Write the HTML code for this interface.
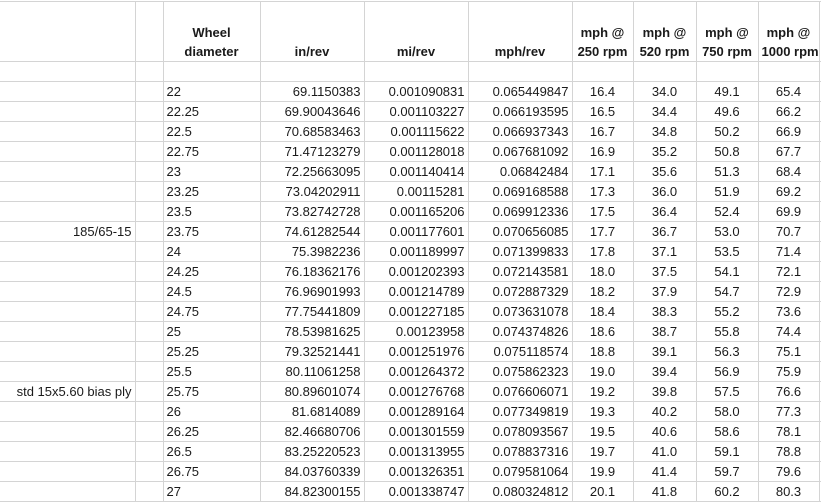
<!DOCTYPE html>
<html><head><meta charset="utf-8"><style>
body{margin:0;background:#fff;width:821px;height:501px;overflow:hidden}
table{border-collapse:collapse;table-layout:fixed;width:822px;position:absolute;left:0;top:1px;font-family:"Liberation Sans",Calibri,sans-serif;font-size:13px;color:#1a1a1a}
td{border:1px solid #d4d4d4;height:19px;padding:0 3px;white-space:nowrap;overflow:hidden;line-height:19px;box-sizing:border-box}
td:first-child{border-left:none}
tr.h td{height:60px;font-weight:bold;text-align:center;vertical-align:bottom;line-height:19px;padding-bottom:0}
tr td{height:20px}
.r{text-align:right}.c{text-align:center}
</style></head><body>
<table>
<colgroup><col style="width:135px"><col style="width:28px"><col style="width:97px"><col style="width:104px"><col style="width:104px"><col style="width:104px"><col style="width:61px"><col style="width:63px"><col style="width:62px"><col style="width:61px"><col style="width:3px"></colgroup>
<tr class="h"><td></td><td></td><td>Wheel<br>diameter</td><td>in/rev</td><td>mi/rev</td><td>mph/rev</td><td>mph @<br>250 rpm</td><td>mph @<br>520 rpm</td><td>mph @<br>750 rpm</td><td>mph @<br>1000 rpm</td><td></td></tr>
<tr><td></td><td></td><td></td><td></td><td></td><td></td><td></td><td></td><td></td><td></td><td></td></tr>
<tr><td></td><td></td><td>22</td><td class="r">69.1150383</td><td class="r">0.001090831</td><td class="r">0.065449847</td><td class="c">16.4</td><td class="c">34.0</td><td class="c">49.1</td><td class="c">65.4</td><td></td></tr>
<tr><td></td><td></td><td>22.25</td><td class="r">69.90043646</td><td class="r">0.001103227</td><td class="r">0.066193595</td><td class="c">16.5</td><td class="c">34.4</td><td class="c">49.6</td><td class="c">66.2</td><td></td></tr>
<tr><td></td><td></td><td>22.5</td><td class="r">70.68583463</td><td class="r">0.001115622</td><td class="r">0.066937343</td><td class="c">16.7</td><td class="c">34.8</td><td class="c">50.2</td><td class="c">66.9</td><td></td></tr>
<tr><td></td><td></td><td>22.75</td><td class="r">71.47123279</td><td class="r">0.001128018</td><td class="r">0.067681092</td><td class="c">16.9</td><td class="c">35.2</td><td class="c">50.8</td><td class="c">67.7</td><td></td></tr>
<tr><td></td><td></td><td>23</td><td class="r">72.25663095</td><td class="r">0.001140414</td><td class="r">0.06842484</td><td class="c">17.1</td><td class="c">35.6</td><td class="c">51.3</td><td class="c">68.4</td><td></td></tr>
<tr><td></td><td></td><td>23.25</td><td class="r">73.04202911</td><td class="r">0.00115281</td><td class="r">0.069168588</td><td class="c">17.3</td><td class="c">36.0</td><td class="c">51.9</td><td class="c">69.2</td><td></td></tr>
<tr><td></td><td></td><td>23.5</td><td class="r">73.82742728</td><td class="r">0.001165206</td><td class="r">0.069912336</td><td class="c">17.5</td><td class="c">36.4</td><td class="c">52.4</td><td class="c">69.9</td><td></td></tr>
<tr><td class="r">185/65-15</td><td></td><td>23.75</td><td class="r">74.61282544</td><td class="r">0.001177601</td><td class="r">0.070656085</td><td class="c">17.7</td><td class="c">36.7</td><td class="c">53.0</td><td class="c">70.7</td><td></td></tr>
<tr><td></td><td></td><td>24</td><td class="r">75.3982236</td><td class="r">0.001189997</td><td class="r">0.071399833</td><td class="c">17.8</td><td class="c">37.1</td><td class="c">53.5</td><td class="c">71.4</td><td></td></tr>
<tr><td></td><td></td><td>24.25</td><td class="r">76.18362176</td><td class="r">0.001202393</td><td class="r">0.072143581</td><td class="c">18.0</td><td class="c">37.5</td><td class="c">54.1</td><td class="c">72.1</td><td></td></tr>
<tr><td></td><td></td><td>24.5</td><td class="r">76.96901993</td><td class="r">0.001214789</td><td class="r">0.072887329</td><td class="c">18.2</td><td class="c">37.9</td><td class="c">54.7</td><td class="c">72.9</td><td></td></tr>
<tr><td></td><td></td><td>24.75</td><td class="r">77.75441809</td><td class="r">0.001227185</td><td class="r">0.073631078</td><td class="c">18.4</td><td class="c">38.3</td><td class="c">55.2</td><td class="c">73.6</td><td></td></tr>
<tr><td></td><td></td><td>25</td><td class="r">78.53981625</td><td class="r">0.00123958</td><td class="r">0.074374826</td><td class="c">18.6</td><td class="c">38.7</td><td class="c">55.8</td><td class="c">74.4</td><td></td></tr>
<tr><td></td><td></td><td>25.25</td><td class="r">79.32521441</td><td class="r">0.001251976</td><td class="r">0.075118574</td><td class="c">18.8</td><td class="c">39.1</td><td class="c">56.3</td><td class="c">75.1</td><td></td></tr>
<tr><td></td><td></td><td>25.5</td><td class="r">80.11061258</td><td class="r">0.001264372</td><td class="r">0.075862323</td><td class="c">19.0</td><td class="c">39.4</td><td class="c">56.9</td><td class="c">75.9</td><td></td></tr>
<tr><td class="r">std 15x5.60 bias ply</td><td></td><td>25.75</td><td class="r">80.89601074</td><td class="r">0.001276768</td><td class="r">0.076606071</td><td class="c">19.2</td><td class="c">39.8</td><td class="c">57.5</td><td class="c">76.6</td><td></td></tr>
<tr><td></td><td></td><td>26</td><td class="r">81.6814089</td><td class="r">0.001289164</td><td class="r">0.077349819</td><td class="c">19.3</td><td class="c">40.2</td><td class="c">58.0</td><td class="c">77.3</td><td></td></tr>
<tr><td></td><td></td><td>26.25</td><td class="r">82.46680706</td><td class="r">0.001301559</td><td class="r">0.078093567</td><td class="c">19.5</td><td class="c">40.6</td><td class="c">58.6</td><td class="c">78.1</td><td></td></tr>
<tr><td></td><td></td><td>26.5</td><td class="r">83.25220523</td><td class="r">0.001313955</td><td class="r">0.078837316</td><td class="c">19.7</td><td class="c">41.0</td><td class="c">59.1</td><td class="c">78.8</td><td></td></tr>
<tr><td></td><td></td><td>26.75</td><td class="r">84.03760339</td><td class="r">0.001326351</td><td class="r">0.079581064</td><td class="c">19.9</td><td class="c">41.4</td><td class="c">59.7</td><td class="c">79.6</td><td></td></tr>
<tr><td></td><td></td><td>27</td><td class="r">84.82300155</td><td class="r">0.001338747</td><td class="r">0.080324812</td><td class="c">20.1</td><td class="c">41.8</td><td class="c">60.2</td><td class="c">80.3</td><td></td></tr>
</table>
</body></html>
